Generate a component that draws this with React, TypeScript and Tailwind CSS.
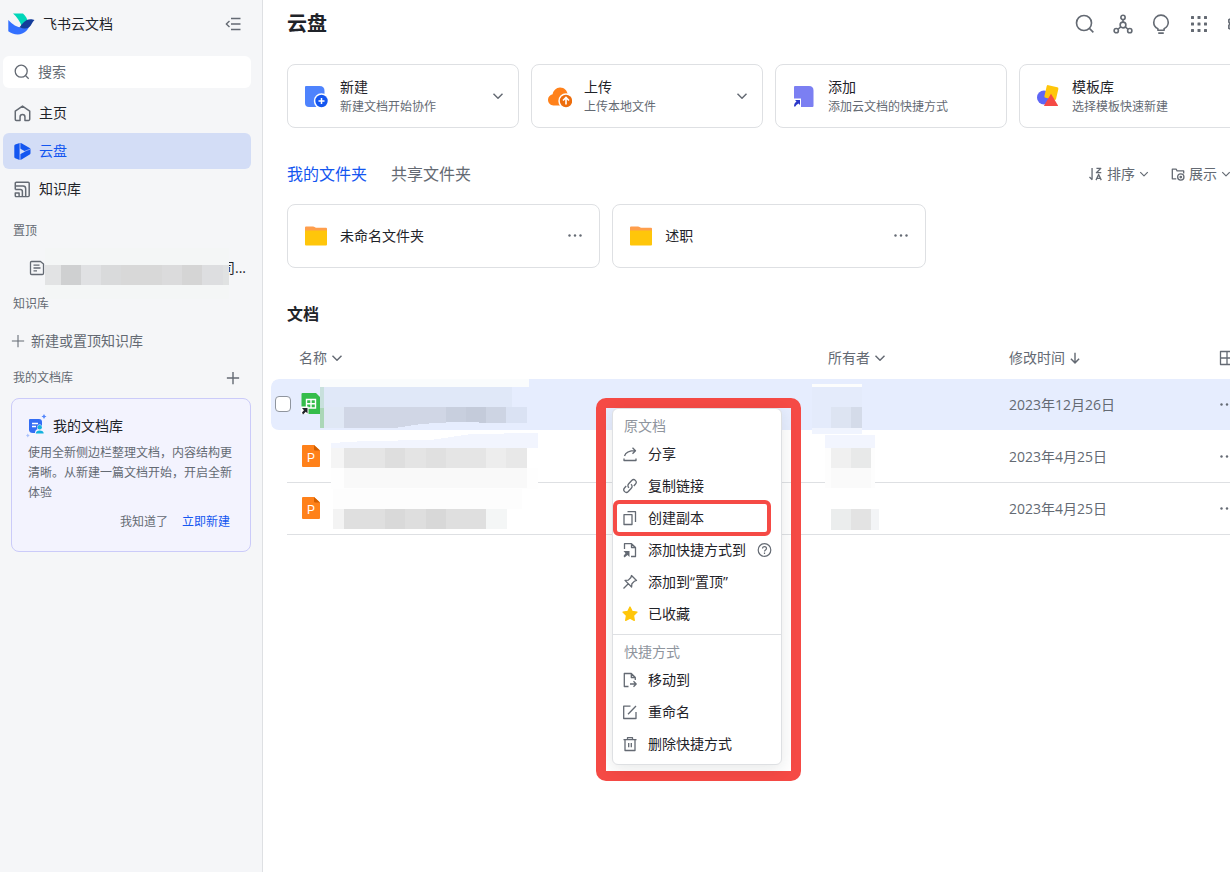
import type { ReactNode } from "react"

type Block = [x: number, y: number, w: number, h: number, fill: string]

const nameBlocks: Block[] = [
    [49, 0, 209, 8, "#fafcfd"],
    [49, 8, 4, 21, "#c8e0dc"],
    [49, 29, 4, 20, "#abd7b7"],
    [53, 8, 188, 20, "#e0e8f8"],
    [53, 28, 20, 21, "#e0e8f5"],
    [235, 28, 21, 16, "#dae2f3"],
    [60, 69, 13, 20, "#f5f5f5"],
    [73, 69, 41, 20, "#e5e5e5"],
    [114, 69, 20, 20, "#dedede"],
    [134, 69, 21, 20, "#e4e4e4"],
    [155, 69, 20, 20, "#e0e0e0"],
    [175, 69, 40, 20, "#e5e5e5"],
    [215, 69, 20, 20, "#ededed"],
    [235, 69, 21, 20, "#e8e8e8"],
    [60, 89, 207, 21, "#fefefe"],
    [73, 89, 183, 20, "#f9f9f9"],
    [62, 110, 189, 20, "#fdfdfd"],
    [62, 130, 11, 20, "#f3f3f3"],
    [73, 130, 41, 20, "#dfdfdf"],
    [114, 130, 20, 20, "#d9d9d9"],
    [134, 130, 21, 20, "#dedede"],
    [155, 130, 20, 20, "#d8d8d8"],
    [175, 130, 40, 20, "#dfdfdf"],
    [215, 130, 21, 20, "#f4f6f6"],
    [541, 5, 50, 3, "#fcfdfd"],
    [541, 8, 50, 41, "#e4ebfb"],
    [560, 28, 20, 21, "#dde4f2"],
    [580, 28, 11, 21, "#d4dbe9"],
    [541, 49, 50, 6, "#f0f4fe"],
    [554, 56, 50, 13, "#f2f5fe"],
    [554, 69, 50, 40, "#fdfdfd"],
    [560, 69, 20, 20, "#f0f0f0"],
    [580, 69, 20, 20, "#e8e9e9"],
    [560, 89, 40, 20, "#fafafa"],
    [560, 130, 20, 21, "#ebeded"],
    [580, 130, 20, 21, "#e3e3e3"],
    [600, 130, 8, 21, "#f3f4f6"],
]

const pinnedBlocks: Block[] = [
    [0, 0, 184, 17, "#f4f6f6"],
    [0, 17, 16, 20, "#e2e3e4"],
    [16, 17, 20, 20, "#cfd0d1"],
    [36, 17, 20, 20, "#e0e1e3"],
    [56, 17, 20, 20, "#d9dadb"],
    [76, 17, 41, 20, "#d8d8d8"],
    [117, 17, 20, 20, "#dbdbdc"],
    [137, 17, 20, 20, "#d5d5d5"],
    [157, 17, 21, 20, "#dddee0"],
    [178, 17, 6, 20, "#e0e2e2"],
    [0, 37, 184, 14, "#f4f6f6"],
]

function Blocks({ data }: { data: Block[] }) {
    return (
        <>
            {data.map(([x, y, w, h, fill]) => (
                <rect key={`${x}-${y}`} x={x} y={y} width={w} height={h} fill={fill} />
            ))}
        </>
    )
}

// line icon drawn on a 16px grid
function Icon({ className = "size-4", width = 1.3, children }: { className?: string, width?: number, children: ReactNode }) {
    return (
        <svg className={`shrink-0 ${className}`} viewBox="0 0 16 16" fill="none" stroke="currentColor" strokeWidth={width} strokeLinejoin="round" aria-hidden="true">
            {children}
        </svg>
    )
}

function Chevron({ className = "size-3" }: { className?: string }) {
    return (
        <Icon className={className} width={1.9}>
            <path d="M2 5l6 6 6-6" />
        </Icon>
    )
}

function Dots() {
    return (
        <svg className="size-4 shrink-0" viewBox="0 0 16 16" fill="#646a73" aria-hidden="true">
            <circle cx="2.5" cy="7.5" r="1.2" />
            <circle cx="8" cy="7.5" r="1.2" />
            <circle cx="13.5" cy="7.5" r="1.2" />
        </svg>
    )
}

function SearchIcon({ className }: { className?: string }) {
    return (
        <Icon className={className} width={1.3}>
            <circle cx="7.2" cy="7.2" r="6" />
            <path d="M11.7 11.7l3 3" />
        </Icon>
    )
}

function Sidebar() {
    return (
        <aside className="flex w-[263px] shrink-0 flex-col border-r border-[#dee0e3] bg-[#f5f6f8] pl-[3px] pr-[11px]">
            <div className="flex h-12 items-center pl-[5px] pr-2.5">
                <svg className="h-[22px] w-7" viewBox="0 0 28 22" aria-hidden="true">
                    <path d="M5 0.5h10c2.8 2.4 4.3 5.6 5 8.3l-6 5.2C12 8.500 9 4 5 0.500z" fill="#00d6b9" />
                    <path d="M0.300 7c4 4.500 9 7.500 13.500 7.500 3.500 0 6-1.500 9-4.500-2 6.500-6.500 11.400-13 11.400-3.800 0-7-1.200-9.500-3.200z" fill="#3370ff" />
                    <path d="M11.500 14.300c3-3.500 5.500-8.100 11-8.100 1.500 0 3 .3 4 .8-2.500 2-3 5.500-5.500 7.300-2.700 1.800-6 1.500-9.500 0z" fill="#133c9a" />
                </svg>
                <span className="ml-[7px] flex-1 text-sm">飞书云文档</span>
                <button type="button" aria-label="收起" className="text-[#646a73]">
                    <Icon width={1.4}>
                        <path d="M4.500 5L1.300 8l3.200 3M6 2.500h9.500M6 8h9.500M6 13.500h9.500" />
                    </Icon>
                </button>
            </div>
            <label className="mt-2 flex h-8 items-center gap-2 rounded-md bg-white pl-[11px] text-[#646a73]">
                <SearchIcon />
                <input type="text" placeholder="搜索" aria-label="搜索" className="w-full text-sm outline-none placeholder:text-[#646a73]" />
            </label>
            <nav className="mt-[7px] flex flex-col gap-0.5 text-sm">
                <a href="#home" className="flex h-9 items-center gap-2 rounded-md pl-[11px]">
                    <Icon className="size-[17px] text-[#646a73]" width={1.4}>
                        <path d="M1.200 5.700L8 1l6.800 4.700v7.800q0 1-1 1H10.300V11.200a2.300 2.300 0 0 0-4.600 0v3.300H2.200q-1 0-1-1z" />
                    </Icon>
                    主页
                </a>
                <a href="#drive" className="flex h-9 items-center gap-2 rounded-md bg-[#d3ddf6] pl-[11px] text-[#1456f0]">
                    <svg className="size-[17px] shrink-0" viewBox="0 0 17 17" aria-hidden="true">
                        <path d="M0.300 3Q0.300 2 1.200 1.600L5 0.200Q6.500-.2 7.500.3L15.700 5Q16.500 5.500 16.500 6.500V10q0 1-.8 1.500L7.500 16.400q-1 .6-2.500.300L1.200 15.200Q.3 14.900.3 14z" fill="#1456f0" />
                        <path d="M6 0v17" stroke="#8fabf5" strokeWidth="1.200" />
                        <path d="M6 5.500l5.300 2.900L6 11.300z" fill="#d3ddf6" />
                        <path d="M10.500 8.300L16.500 6" stroke="#8fabf5" strokeWidth="0.900" />
                    </svg>
                    云盘
                </a>
                <a href="#wiki" className="flex h-9 items-center gap-2 rounded-md pl-[11px]">
                    <Icon className="size-[17px] text-[#646a73]" width={1.4}>
                        <path d="M1.200 5V2.200Q1.200 1.200 2.200 1.200H13.300Q14.300 1.200 14.300 2.200V13.700Q14.300 14.700 13.300 14.700H2.200Q1.200 14.700 1.200 13.700V11.300H4.800V14.700M1.200 4.700h7.300q2.500 0 2.500 2.500v7.500M1.200 8h4.700q2 0 2 2v4.700M1.200 4v4" />
                    </Icon>
                    知识库
                </a>
            </nav>
            <h2 className="mt-3.5 pl-2.5 text-xs leading-5 text-[#646a73]">置顶</h2>
            <a href="#pinned" className="relative mt-3 flex h-[30px] items-center justify-between pl-[26px] pr-[5px] text-sm">
                <Icon className="size-4 text-[#646a73]">
                    <path d="M2.500 1.500h9L14.500 4v9.300q0 1.200-1.200 1.200H2.700q-1.200 0-1.200-1.200V2.500q0-1 1-1zM4.500 5.200h6M4.500 8h7M4.500 10.800h3.500" />
                </Icon>
                <span>司...</span>
                <svg className="absolute -top-[5px] left-[42px] h-[51px] w-[184px]" viewBox="0 0 184 51" shapeRendering="crispEdges" aria-hidden="true">
                    <Blocks data={pinnedBlocks} />
                </svg>
            </a>
            <h2 className="mt-[11px] pl-2.5 text-xs leading-5 text-[#646a73]">知识库</h2>
            <button type="button" className="mt-4 flex h-[22px] items-center gap-1.5 pl-2 text-sm text-[#646a73]">
                <Icon className="size-[14px]" width={1.2}><path d="M8 1v14M1 8h14" /></Icon>
                新建或置顶知识库
            </button>
            <div className="mt-4 flex h-5 items-center justify-between pl-2.5 pr-[11px] text-[#646a73]">
                <h2 className="text-xs">我的文档库</h2>
                <button type="button" aria-label="添加">
                    <Icon className="size-[14px]" width={1.6}><path d="M8 1v14M1 8h14" /></Icon>
                </button>
            </div>
            <section className="ml-2 mt-2.5 rounded-lg border border-[#cbcbf9] bg-[#f3f3fe] px-4 pb-[18px] pt-4">
                <h3 className="flex h-[22px] items-center text-sm">
                    <svg className="-ml-0.5 mr-[5px] h-6 w-[22px]" viewBox="0 0 22 24" aria-hidden="true">
                        <path d="M3 6q0-1 1-1h9q3 0 3 3v11H7q-4 0-4-3.500z" fill="#336df4" />
                        <path d="M6 9.500h6M6 12.500h4" stroke="#fff" strokeWidth="1.300" />
                        <path d="M9 20v-1.500c0-2 1.500-3 2.500-3.300-1-3 .5-4.700 2.200-4.700s3.200 2 2.200 4.700c1 .3 2.100 1.300 2.100 3.300V20z" fill="#f3f3fe" />
                        <circle cx="13.700" cy="13.300" r="2.200" fill="#14b1dd" />
                        <path d="M9.800 19.500c.2-2 1.500-3 3.900-3s4 1 4 3z" fill="#14b1dd" />
                        <path d="M18 0l.9 1.700L20.500 2.500l-1.600.8L18 5l-.9-1.700-1.600-.8 1.600-.8z" fill="#5083fb" />
                        <path d="M1.800 19.500l.7 1.300 1.300.7-1.300.7-.7 1.300-.7-1.300L0 21.500l1.100-.7z" fill="#a9c0fc" />
                    </svg>
                    我的文档库
                </h3>
                <p className="mt-1.5 text-xs leading-5 text-[#646a73]">使用全新侧边栏整理文档，内容结构更清晰。从新建一篇文档开始，开启全新体验</p>
                <div className="mt-2 flex h-[22px] justify-end gap-3.5 pr-1 text-xs">
                    <button type="button" className="text-[#646a73]">我知道了</button>
                    <button type="button" className="text-[#1456f0]">立即新建</button>
                </div>
            </section>
        </aside>
    )
}

function Topbar() {
    return (
        <header className="flex h-12 items-center justify-between pr-1">
            <h1 className="text-xl font-bold">云盘</h1>
            <div className="flex gap-[18px] text-[#646a73]">
                <button type="button" aria-label="搜索"><SearchIcon className="size-5" /></button>
                <button type="button" aria-label="关系图">
                    <Icon className="size-5">
                        <circle cx="8" cy="2.700" r="1.700" />
                        <circle cx="8" cy="8.800" r="2.300" />
                        <circle cx="2.600" cy="13.300" r="1.700" />
                        <circle cx="13.400" cy="13.300" r="1.700" />
                        <path d="M8 4.400v2.100M6.200 10.300l-2.200 1.900M9.800 10.300l2.200 1.900" />
                    </Icon>
                </button>
                <button type="button" aria-label="提示">
                    <Icon className="size-5">
                        <path d="M5.500 13V11.700C3.500 10.700 2.200 9 2.200 6.700a5.800 5.800 0 0 1 11.600 0c0 2.300-1.300 4-3.300 5V13zM5.800 15.300h4.400" />
                    </Icon>
                </button>
                <button type="button" aria-label="应用">
                    <svg className="size-5" viewBox="0 0 20 20" fill="#646a73" aria-hidden="true">
                        {[2, 8.500, 15].map(y => [2, 8.500, 15].map(x => (
                            <rect key={`${x}-${y}`} x={x} y={y} width="3" height="3" rx="0.500" />
                        )))}
                    </svg>
                </button>
                <button type="button" aria-label="设置">
                    <Icon className="size-5">
                        <path d="M4.500 2h7l1 1.500 2.500 1v7l-2.500 1-1 1.500h-7l-1-1.500-2-1v-2.500L2.500 8 1.500 6.500v-2l2-1z" />
                        <circle cx="8" cy="8" r="2.300" />
                    </Icon>
                </button>
            </div>
        </header>
    )
}

const actions = [
    {
        title: "新建", desc: "新建文档开始协作", arrow: true,
        icon: <>
            <path d="M1 3q0-1 1-1h13.500q5 0 5 5v16H5q-4 0-4-4z" fill="#4e83fd" />
            <circle cx="17.500" cy="17" r="7.700" fill="#fff" />
            <circle cx="17.500" cy="17" r="6.200" fill="#1456f0" />
            <path d="M17.500 14v6M14.500 17h6" stroke="#fff" strokeWidth="1.500" />
        </>,
    },
    {
        title: "上传", desc: "上传本地文件", arrow: true,
        icon: <>
            <path d="M5.500 21.500C2.500 21.500 0 19 0 15.800c0-2.900 2-5.100 4.600-5.600C5.400 6.500 8.300 3.500 12 3.500c4.500 0 7.500 3.500 7.800 7.500 2 .8 3.700 2.800 3.700 5.300 0 3-2.300 5.200-5 5.200z" fill="#ff811a" />
            <circle cx="18" cy="17" r="7.700" fill="#fff" />
            <circle cx="18" cy="17" r="6.200" fill="#ed6d0c" />
            <path d="M18 20.500v-6.500M15 16.500l3-3 3 3" stroke="#fff" strokeWidth="1.600" fill="none" />
        </>,
    },
    {
        title: "添加", desc: "添加云文档的快捷方式", arrow: false,
        icon: <>
            <path d="M2 3q0-1 1-1h14q4.500 0 4.500 4.500V22q0 1-1 1H9V14.500H2z" fill="#7b7ff2" />
            <path d="M2 22.500c0-2.300.8-3.800 2.500-5L3 16h5v5l-1.500-1.500C5 20.300 4 21.300 3.300 22.500z" fill="#2c39c9" />
        </>,
    },
    {
        title: "模板库", desc: "选择模板快速新建", arrow: false,
        icon: <>
            <circle cx="8" cy="13.500" r="7" fill="#5e66f5" />
            <rect x="9.500" y="2" width="12" height="13" rx="1.500" transform="rotate(13 15.500 8)" fill="#ffc60a" />
            <path d="M15 9.800L22 21.500q0 .5-.5.500H8.500q-.6 0-.4-.5z" fill="#f54a45" />
        </>,
    },
]

function ActionCards() {
    return (
        <div className="mt-4 grid grid-cols-4 gap-3">
            {actions.map(a => (
                <button key={a.title} type="button" className="flex h-16 items-center gap-3 rounded-lg border border-[#dee0e3] pl-4 pr-3.5 text-left">
                    <svg className="size-6 shrink-0" viewBox="0 0 24 24" aria-hidden="true">{a.icon}</svg>
                    <span className="flex flex-1 flex-col">
                        <span className="text-sm leading-[22px]">{a.title}</span>
                        <span className="text-xs leading-[18px] text-[#646a73]">{a.desc}</span>
                    </span>
                    {a.arrow && <Chevron className="size-3 text-[#646a73]" />}
                </button>
            ))}
        </div>
    )
}

function Folders() {
    return (
        <>
            <div className="mt-[34px] flex h-6 items-center justify-between pr-5">
                <div className="flex gap-6 text-base">
                    <button type="button" className="text-[#1456f0]">我的文件夹</button>
                    <button type="button" className="text-[#646a73]">共享文件夹</button>
                </div>
                <div className="flex gap-[22px] text-sm text-[#646a73]">
                    <button type="button" className="flex items-center gap-1">
                        <Icon className="size-[14px]" width={1.500}>
                            <path d="M3.500 1v13.500M3.700 14.500L0.500 11.500M8.500 1.500h5l-5 5h5.500M8 15l3-6.500 3 6.500M9 13h4" />
                        </Icon>
                        排序
                        <Chevron className="size-[10px]" />
                    </button>
                    <button type="button" className="flex items-center gap-1">
                        <Icon className="size-[14px]" width={1.500}>
                            <path d="M6 13.500H1.500v-11h4.500l1 2H14.500v3" />
                            <circle cx="11.200" cy="11.500" r="3.600" />
                            <circle cx="11.200" cy="11.500" r="0.800" />
                        </Icon>
                        展示
                        <Chevron className="size-[10px]" />
                    </button>
                </div>
            </div>
            <div className="mt-[18px] grid grid-cols-3 gap-3">
                {["未命名文件夹", "述职"].map(name => (
                    <div key={name} className="flex h-16 items-center gap-3 rounded-lg border border-[#dee0e3] px-4 text-sm">
                        <svg className="size-6 shrink-0" viewBox="0 0 24 24" aria-hidden="true">
                            <path d="M1 3.500Q1 2.500 2 2.500h7q1 0 2 .7t2 .6h9q1 0 1 1V9H1z" fill="#ff9e4c" />
                            <path d="M1 6.500h22V20.500q0 1-1 1H2q-1 0-1-1z" fill="#ffc60a" />
                        </svg>
                        <a href="#folder" className="flex-1">{name}</a>
                        <button type="button" aria-label="更多"><Dots /></button>
                    </div>
                ))}
            </div>
        </>
    )
}

function SheetIcon() {
    return (
        <svg className="h-6 w-5" viewBox="0 0 20 24" aria-hidden="true">
            <path d="M0.500 2q0-1 1-1H15l5 5v15q0 1-1 1H0.500z" fill="#35bd4b" />
            <path d="M5.500 7.500h9v8.500h-9zM10 7.500V16M5.500 11.700h9" fill="none" stroke="#fff" strokeWidth="1.400" />
            <path d="M0 14.500h7.500V22H0z" fill="#fff" />
            <path d="M1 16h5.500v5.500L4.800 19.800 2 22.500 1 20.500l2-2.200z" fill="#1f2329" />
        </svg>
    )
}

function SlideIcon() {
    return (
        <svg className="h-6 w-5" viewBox="0 0 20 24" aria-hidden="true">
            <path d="M1 2q0-1 1-1h11l6 5.500V22q0 1-1 1H2q-1 0-1-1z" fill="#ff811a" />
            <path d="M13 1l6 5.500h-5q-1 0-1-1z" fill="#d25f00" />
            <text x="10" y="18" fontSize="12" textAnchor="middle" fill="#fff" fontFamily="Liberation Sans, sans-serif">P</text>
        </svg>
    )
}

const rows = [
    { id: 1, date: "2023年12月26日", selected: true },
    { id: 2, date: "2023年4月25日", selected: false },
    { id: 3, date: "2023年4月25日", selected: false },
]

function Documents() {
    return (
        <>
            <h2 className="mt-[34px] text-base font-bold leading-6">文档</h2>
            <div className="relative -mx-4 mt-[11px]">
                <table className="w-full table-fixed border-separate border-spacing-0 text-left text-sm text-[#646a73]">
                    <colgroup>
                        <col className="w-4" />
                        <col />
                        <col className="w-[181px]" />
                        <col className="w-[210px]" />
                        <col className="w-12" />
                    </colgroup>
                    <thead>
                        <tr className="h-[42px]">
                            <th className="p-0" />
                            <th className="p-0 pl-3 font-normal">
                                <button type="button" className="flex items-center gap-1">名称<Chevron /></button>
                            </th>
                            <th className="p-0 font-normal">
                                <button type="button" className="flex items-center gap-1">所有者<Chevron /></button>
                            </th>
                            <th className="p-0 font-normal">
                                <button type="button" className="flex items-center gap-1">
                                    修改时间
                                    <Icon className="size-3" width={1.900}><path d="M8 1v13.500M2.500 9L8 14.500 13.500 9" /></Icon>
                                </button>
                            </th>
                            <th className="p-0">
                                <button type="button" aria-label="视图" className="block">
                                    <Icon><path d="M1.500 1.500h13v13h-13zM8 1.500v13M1.500 8h13" /></Icon>
                                </button>
                            </th>
                        </tr>
                    </thead>
                    <tbody>
                        {rows.map(row => (
                            <tr key={row.id} className={row.selected ? "h-[52px] *:border-b *:border-transparent *:bg-[#e6edfe] *:bg-clip-padding" : "h-[52px] *:border-b *:border-[#dee0e3] *:first:border-transparent"}>
                                <td className="relative z-10 rounded-l-lg p-0 pb-0.5 pl-1">
                                    {row.selected && (
                                        <input type="checkbox" aria-label="选择" className="block size-4 max-w-none appearance-none rounded border border-[#8f959e] bg-white" />
                                    )}
                                </td>
                                <td className="p-0 pb-0.5 pl-3.5">{row.selected ? <SheetIcon /> : <SlideIcon />}</td>
                                <td className="p-0" />
                                <td className="p-0">{row.date}</td>
                                <td className="p-0">
                                    <button type="button" aria-label="更多" className="block"><Dots /></button>
                                </td>
                            </tr>
                        ))}
                    </tbody>
                </table>
                <svg className="absolute left-0 top-[42px] h-[156px] w-[610px]" viewBox="0 0 610 156" shapeRendering="crispEdges" aria-hidden="true">
                    <Blocks data={nameBlocks} />
                    <path d="M73 28h102v15.500l-25 1.500-26 4H73z" fill="#d0d6e5" />
                    <path d="M175 28h20v14.500l-20 1z" fill="#c8cfde" />
                    <path d="M195 28h20v16l-20-1.500z" fill="#c4cbda" />
                    <path d="M215 28h20v16h-20z" fill="#cdd4e3" />
                    <path d="M60 64l34-2 66-1 40-6 67-1v15H60z" fill="#f2f5fe" />
                </svg>
            </div>
        </>
    )
}

const sourceItems = [
    { label: "分享", icon: <path d="M2 12.500v2h12v-2M2.500 10C3.500 6.500 6 4.700 13.500 4.700M10.500 1.700l3 3-3 3" /> },
    { label: "复制链接", icon: <path d="M7 9.800C5.500 8.500 5.700 6.800 6.700 5.700l3-3.200c2.500-2.500 6 1 3.800 3.500L11.800 8M9 6.200c1.500 1.300 1.300 3 .3 4.100l-3 3.200c-2.500 2.500-6-1-3.800-3.500L4.200 8" /> },
    { label: "创建副本", icon: <path d="M2 4.700h8v9.800H2zM5.500 1.700H13.500v10.300" />, marked: true },
    {
        label: "添加快捷方式到", help: true,
        icon: <>
            <path d="M2.500 7V1.700h7L13.500 5.500v9H9M9.500 1.700v3.800h4" />
            <path d="M1.500 9h6v6L5.500 13 2.500 15.500 1.500 14l2-2.800z" fill="currentColor" stroke="none" />
        </>,
    },
    { label: "添加到“置顶”", icon: <path d="M9.500 1.500l5 5-2 .6-2.600 2.600-.3 3.300L3 6.400l3.300-.3L8.900 3.500zM6.300 9.700L1.500 14.500" /> },
    { label: "已收藏", icon: <path d="M8 1l2.100 4.400 4.900.7-3.500 3.400.8 4.900L8 12.100l-4.300 2.300.8-4.900L1 6.100l4.900-.7z" fill="#ffc60a" stroke="#ffc60a" /> },
]

const shortcutItems = [
    { label: "移动到", icon: <path d="M6.500 14.500H2.300v-13h7L13.300 5.500V8M9.300 1.500v4h4M8 12h6M11.500 9.300l2.700 2.700-2.700 2.700" /> },
    { label: "重命名", icon: <path d="M8.500 2.200H1.700v12.300h12.300V8M6 10.300L14 2" /> },
    { label: "删除快捷方式", icon: <path d="M1.500 3.700h13M5.500 3.500V1.700h5v1.800M3 3.700v10.800h10V3.700M6.700 7v4.300M9.300 7v4.300" /> },
]

function MenuItem({ label, icon, marked, help }: { label: string, icon: ReactNode, marked?: boolean, help?: boolean }) {
    return (
        <button type="button" role="menuitem" className="relative flex h-8 w-full items-center gap-2.5 whitespace-nowrap pl-[9px] text-left">
            <Icon className="size-4 text-[#646a73]">{icon}</Icon>
            {label}
            {help && (
                <Icon className="size-4 text-[#646a73]" width={1.200}>
                    <circle cx="8.500" cy="8" r="6.300" />
                    <path d="M6.500 6.500c0-2.600 4-2.600 4 0 0 1.400-2 1.500-2 3M8.500 10.500V12" />
                </Icon>
            )}
            {marked && <span className="absolute -inset-y-0.5 left-0 right-2.5 rounded-md border-4 border-[#f54a45]" />}
        </button>
    )
}

function ContextMenu() {
    return (
        <div className="absolute left-[333px] top-[398px] w-[205px] rounded-[10px] border-10 border-[#f54a45] px-[9px] pb-1.5 pl-1.5">
            <div role="menu" className="rounded-md border border-[#dee0e3] bg-white py-1 text-sm shadow-[0_4px_16px_rgba(31,35,41,0.1)]">
                <div className="flex h-[25px] items-center pl-[11px] text-[#8f959e]">原文档</div>
                {sourceItems.map(item => <MenuItem key={item.label} {...item} />)}
                <hr className="my-1 border-[#dee0e3]" />
                <div className="flex h-[25px] items-center pl-[11px] text-[#8f959e]">快捷方式</div>
                {shortcutItems.map(item => <MenuItem key={item.label} {...item} />)}
            </div>
        </div>
    )
}

export default function App() {
    return (
        <div lang="zh-CN" className="flex min-h-screen bg-white font-['Open_Sans','Noto_Sans_CJK_SC',sans-serif] text-[#1f2329]">
            <Sidebar />
            <main className="relative min-w-0 flex-1 overflow-hidden">
                <div className="min-w-[1012px] px-6">
                    <Topbar />
                    <ActionCards />
                    <Folders />
                    <Documents />
                </div>
                <ContextMenu />
            </main>
        </div>
    )
}
